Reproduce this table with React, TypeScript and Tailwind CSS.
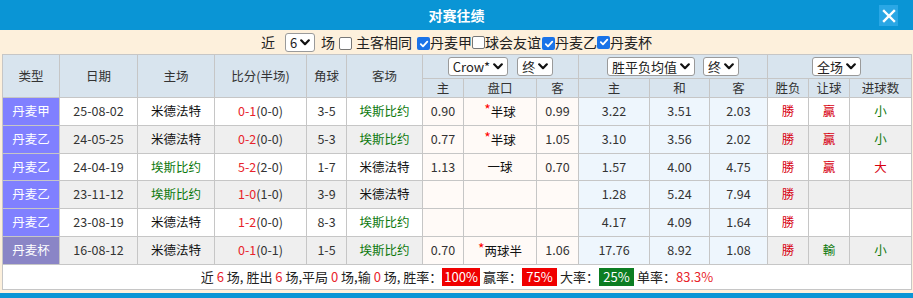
import React from "react";

const FONT = { fontFamily: '"Noto Sans CJK SC", "Noto Sans", sans-serif' };

type Row = {
  type: string;
  typeBg: string;
  date: string;
  home: string;
  homeGreen: boolean;
  score: string;
  half: string;
  corner: string;
  away: string;
  awayGreen: boolean;
  h: string;
  pan: string;
  star: boolean;
  a: string;
  w: string;
  d: string;
  l: string;
  res: string;
  rang: string;
  rangGreen: boolean;
  ou: string;
  ouGreen: boolean;
};

const rows: Row[] = [
  { type: "丹麦甲", typeBg: "bg-[#8080ff]", date: "25-08-02", home: "米德法特", homeGreen: false, score: "0-1", half: "(0-0)", corner: "3-5", away: "埃斯比约", awayGreen: true, h: "0.90", pan: "半球", star: true, a: "0.99", w: "3.22", d: "3.51", l: "2.03", res: "勝", rang: "贏", rangGreen: false, ou: "小", ouGreen: true },
  { type: "丹麦乙", typeBg: "bg-[#8080ff]", date: "24-05-25", home: "米德法特", homeGreen: false, score: "0-2", half: "(0-0)", corner: "5-3", away: "埃斯比约", awayGreen: true, h: "0.77", pan: "半球", star: true, a: "1.05", w: "3.10", d: "3.56", l: "2.02", res: "勝", rang: "贏", rangGreen: false, ou: "小", ouGreen: true },
  { type: "丹麦乙", typeBg: "bg-[#8080ff]", date: "24-04-19", home: "埃斯比约", homeGreen: true, score: "5-2", half: "(2-0)", corner: "1-7", away: "米德法特", awayGreen: false, h: "1.13", pan: "一球", star: false, a: "0.70", w: "1.57", d: "4.00", l: "4.75", res: "勝", rang: "贏", rangGreen: false, ou: "大", ouGreen: false },
  { type: "丹麦乙", typeBg: "bg-[#8080ff]", date: "23-11-12", home: "埃斯比约", homeGreen: true, score: "1-0", half: "(1-0)", corner: "3-9", away: "米德法特", awayGreen: false, h: "", pan: "", star: false, a: "", w: "1.28", d: "5.24", l: "7.94", res: "勝", rang: "", rangGreen: false, ou: "", ouGreen: false },
  { type: "丹麦乙", typeBg: "bg-[#8080ff]", date: "23-08-19", home: "米德法特", homeGreen: false, score: "1-2", half: "(0-0)", corner: "8-3", away: "埃斯比约", awayGreen: true, h: "", pan: "", star: false, a: "", w: "4.17", d: "4.09", l: "1.64", res: "勝", rang: "", rangGreen: false, ou: "", ouGreen: false },
  { type: "丹麦杯", typeBg: "bg-[#8a85c6]", date: "16-08-12", home: "米德法特", homeGreen: false, score: "0-1", half: "(0-1)", corner: "1-5", away: "埃斯比约", awayGreen: true, h: "0.70", pan: "两球半", star: true, a: "1.06", w: "17.76", d: "8.92", l: "1.08", res: "勝", rang: "輸", rangGreen: true, ou: "小", ouGreen: true },
];

const widths = [57, 78, 77, 92, 40, 76, 41, 73, 42, 71, 60, 58, 41, 41, 62];

function Chevron() {
  return (
    <svg width="10" height="7" viewBox="0 0 10 7" className="ml-[3px]">
      <path d="M1.2 1.3 L5 5.2 L8.8 1.3" fill="none" stroke="#111" strokeWidth="2.2" strokeLinecap="round" strokeLinejoin="round" />
    </svg>
  );
}

function FakeSelect({ label, className = "" }: { label: string; className?: string }) {
  return (
    <span className={`inline-flex h-[19px] items-center rounded-[3px] border border-[#9a9a9a] bg-white px-[4px] text-[13px] leading-none text-[#222] ${className}`}>
      {label}
      <Chevron />
    </span>
  );
}

function Box({ checked }: { checked: boolean }) {
  if (checked) {
    return (
      <span className="inline-flex h-[13px] w-[13px] items-center justify-center rounded-[2px] bg-[#1a73e8] align-middle">
        <svg width="10" height="10" viewBox="0 0 10 10">
          <path d="M1.8 5.2 L4 7.4 L8.3 2.6" fill="none" stroke="#fff" strokeWidth="1.8" strokeLinecap="round" strokeLinejoin="round" />
        </svg>
      </span>
    );
  }
  return <span className="inline-block h-[13px] w-[13px] rounded-[2px] border border-[#777] bg-white align-middle" />;
}

const td = "border border-[#c6c6c6] text-center p-0";

function Badge({ children, bg }: { children: React.ReactNode; bg: string }) {
  return (
    <span className={`flex h-[18px] min-w-[35px] items-center justify-center px-[2px] text-white ${bg}`}>{children}</span>
  );
}

export default function App() {
  return (
    <div className="w-[913px] h-[298px] overflow-hidden bg-[#fdf0dc] text-[#333]" style={FONT}>
      {/* Title bar */}
      <div className="relative flex h-[30px] items-center justify-center bg-[#0a95d5]">
        <span className="text-[14px] font-bold text-white">对赛往绩</span>
        <span className="absolute right-[15px] top-[5px] flex h-[21px] w-[19px] items-center justify-center bg-[#2aa7e5]">
          <svg width="14" height="14" viewBox="0 0 14 14">
            <path d="M2 2 L12 12 M12 2 L2 12" stroke="#fff" strokeWidth="2.4" strokeLinecap="square" />
          </svg>
        </span>
      </div>

      {/* Filter row */}
      <div className="flex h-[24px] items-center justify-center text-[14px] text-[#222]">
        <span>近</span>
        <FakeSelect label="6" className="ml-[10px] mr-[6px] h-[16px] px-[3px] text-[12px]" />
        <span>场</span>
        <span className="ml-[4px]"><Box checked={false} /></span>
        <span className="ml-[4px]">主客相同</span>
        <span className="ml-[5px]"><Box checked={true} /></span>
        <span>丹麦甲</span>
        <Box checked={false} />
        <span>球会友谊</span>
        <span className="ml-[1px]"><Box checked={true} /></span>
        <span>丹麦乙</span>
        <Box checked={true} />
        <span>丹麦杯</span>
      </div>

      {/* Table */}
      <table className="ml-[2px] w-[909px] table-fixed border-collapse text-[12.5px]">
        <colgroup>
          {widths.map((w, i) => (
            <col key={i} style={{ width: w }} />
          ))}
        </colgroup>
        <thead className="bg-[#d8e4ee] text-[#333]">
          <tr className="h-[24px]">
            <th rowSpan={2} className={`${td} font-normal`}>类型</th>
            <th rowSpan={2} className={`${td} font-normal`}>日期</th>
            <th rowSpan={2} className={`${td} font-normal`}>主场</th>
            <th rowSpan={2} className={`${td} font-normal`}>比分(半场)</th>
            <th rowSpan={2} className={`${td} font-normal`}>角球</th>
            <th rowSpan={2} className={`${td} font-normal`}>客场</th>
            <th colSpan={3} className={`${td} font-normal`}>
              <div className="flex items-center justify-center gap-[9px]">
                <FakeSelect label="Crow*" />
                <FakeSelect label="终" />
              </div>
            </th>
            <th colSpan={3} className={`${td} font-normal`}>
              <div className="flex items-center justify-center gap-[8px]">
                <FakeSelect label="胜平负均值" />
                <FakeSelect label="终" />
              </div>
            </th>
            <th colSpan={3} className={`${td} font-normal`}>
              <div className="flex items-center justify-center pr-[6px]">
                <FakeSelect label="全场" />
              </div>
            </th>
          </tr>
          <tr className="h-[19px] leading-none">
            {["主", "盘口", "客", "主", "和", "客", "胜负", "让球", "进球数"].map((t, i) => (
              <th key={i} className={`${td} font-normal`}>{t}</th>
            ))}
          </tr>
        </thead>
        <tbody>
          {rows.map((r, i) => {
            const rowBg = i % 2 === 0 ? "bg-white" : "bg-[#efefef]";
            return (
              <tr key={i} className={i === 2 ? "h-[27px]" : "h-[28px]"}>
                <td className={`${td} ${r.typeBg} text-white`}>{r.type}</td>
                <td className={`${td} ${rowBg}`}>{r.date}</td>
                <td className={`${td} ${rowBg} ${r.homeGreen ? "text-[#0b780b]" : "text-[#111]"}`}>{r.home}</td>
                <td className={`${td} ${rowBg}`}>
                  <span className="text-[#e8232b]">{r.score}</span>
                  <span>{r.half}</span>
                </td>
                <td className={`${td} ${rowBg}`}>{r.corner}</td>
                <td className={`${td} ${rowBg} ${r.awayGreen ? "text-[#0b780b]" : "text-[#111]"}`}>{r.away}</td>
                <td className={`${td} bg-[#fffaf7]`}>{r.h}</td>
                <td className={`${td} bg-[#fffaf7] text-[#111]`}>
                  {r.star && <span className="relative top-[-2px] text-[14px] text-[#ff0000]">*</span>}
                  {r.pan}
                </td>
                <td className={`${td} bg-[#fffaf7]`}>{r.a}</td>
                <td className={`${td} bg-[#eef6fd]`}>{r.w}</td>
                <td className={`${td} bg-[#eef6fd]`}>{r.d}</td>
                <td className={`${td} bg-[#eef6fd]`}>{r.l}</td>
                <td className={`${td} ${rowBg} text-[#d7000f]`}>{r.res}</td>
                <td className={`${td} ${rowBg} ${r.rangGreen ? "text-[#0b780b]" : "text-[#d7000f]"}`}>{r.rang}</td>
                <td className={`${td} ${rowBg} ${r.ouGreen ? "text-[#0b780b]" : "text-[#d7000f]"}`}>{r.ou}</td>
              </tr>
            );
          })}
          <tr className="h-[25px]">
            <td colSpan={15} className={`${td} bg-white text-[13px] text-[#222]`}>
              <div className="flex items-center justify-center">
                <span>近 <span className="text-[#e8232b]">6</span> 场, 胜出 <span className="text-[#e8232b]">6</span> 场,平局 <span className="text-[#e8232b]">0</span> 场,输 <span className="text-[#e8232b]">0</span> 场, 胜率：</span>
                <Badge bg="bg-[#f00000]">100%</Badge>
                <span className="ml-[3px]">赢率：</span>
                <Badge bg="bg-[#f00000]">75%</Badge>
                <span className="ml-[3px]">大率：</span>
                <Badge bg="bg-[#0c7d22]">25%</Badge>
                <span className="ml-[3px]">单率：</span>
                <span className="text-[#e8232b]">83.3%</span>
              </div>
            </td>
          </tr>
        </tbody>
      </table>
      <div className="h-[3px]" />
      <div className="h-[10px] bg-[#0a95d5]" />
    </div>
  );
}
